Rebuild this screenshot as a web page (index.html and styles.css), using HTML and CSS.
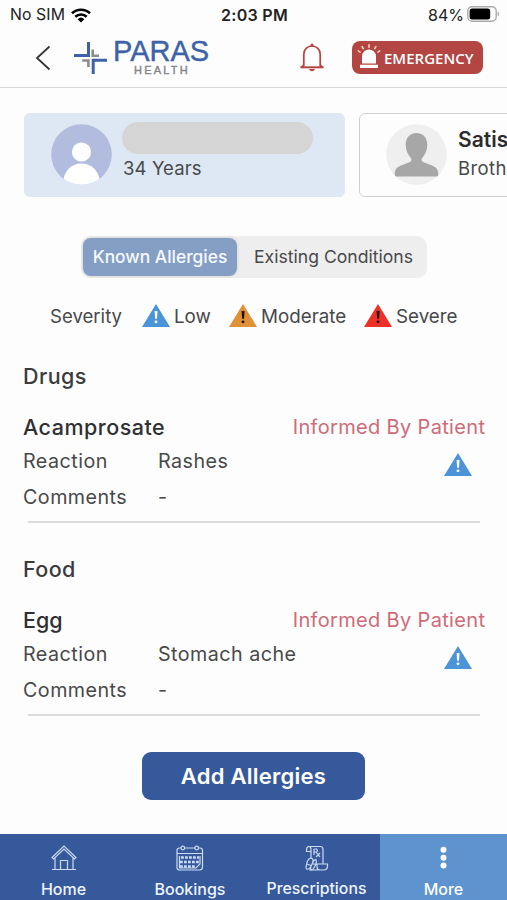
FILE: index.html
```html
<!DOCTYPE html>
<html lang="en">
<head>
<meta charset="utf-8">
<title>Paras Health - Allergies</title>
<link rel="stylesheet" href="styles.css">
</head>
<body>
<svg class="defs" width="0" height="0" aria-hidden="true">
  <symbol id="warn" viewBox="0 0 28 24" preserveAspectRatio="none">
    <path d="M14 0 28 24H0Z" fill="currentColor"/>
    <path d="M12.600 7.200h2.900l-.5 8.300h-1.900Z" fill="var(--mark)"/>
    <circle cx="14" cy="18.600" r="1.500" fill="var(--mark)"/>
  </symbol>
</svg>
<div class="screen">
  <div class="status">
    <div class="carrier"><span>No SIM</span>
      <svg width="20" height="15" viewBox="0 0 20 15"><g fill="none" stroke="#000" stroke-width="2.600"><path d="M1 5.300a13 13 0 0 1 18 0"/><path d="M4.300 8.800a8.200 8.200 0 0 1 11.400 0"/></g><path d="M6.600 11.200a5 5 0 0 1 6.800 0L10 14.600Z"/></svg>
    </div>
    <div class="time">2:03 PM</div>
    <div class="battery"><span>84%</span>
      <svg width="33" height="16" viewBox="0 0 33 16"><rect x=".8" y=".8" width="28.400" height="14.400" rx="4.200" fill="#fff" stroke="#aaa" stroke-width="1.400"/><rect x="2.600" y="2.600" width="20.600" height="10.800" rx="2.500"/><path d="M30.700 5.500c2 .7 2 4.300 0 5Z" fill="#aaa"/></svg>
    </div>
  </div>
  <header class="header">
    <svg class="back" width="16" height="26" viewBox="0 0 16 26"><path d="M14.500 1.500 2 13l12.500 11.500" fill="none" stroke="#333" stroke-width="1.800"/></svg>
    <div class="logo">
      <svg width="34" height="34" viewBox="0 0 34 34"><g fill="none"><path d="M14.500 1v13.600H0M19.200 33V19.300H33" stroke="#3d62a8" stroke-width="3"/><path d="M18.700 8.500v6.200H25M8.200 19.500h6.200V26" stroke="#8b8b8f" stroke-width="2.600"/></g></svg>
      <div class="logo-words"><div class="paras">PARAS</div><div class="health">HEALTH</div></div>
    </div>
    <svg class="bell" width="24" height="29" viewBox="0 0 24 29"><g fill="none" stroke="#b34643" stroke-width="1.700"><path d="M3.800 23.500V11.500C3.800 6.300 7.200 3 12 3s8.200 3.300 8.200 8.500v12"/><path d="M.5 24.300h23" stroke-width="2"/></g><path d="M3.800 20.500v3.800H.5ZM20.200 20.500v3.800h3.300ZM9.200 26h5.600c-.5 3-5.100 3-5.600 0Z" fill="#b34643"/><circle cx="12" cy="2.200" r="1.600" fill="#b34643"/></svg>
    <div class="emergency">
      <svg width="24" height="25" viewBox="0 0 24 25"><path d="M5 19.500V12.500a7 7 0 0 1 14 0v7ZM3 20.800h18V24H3Z" fill="#fff"/><path d="m.8 6.500 2.800 2M4.800 2.200l1.800 3M12 .2v3.600M19.200 2.200l-1.800 3M23.200 6.500l-2.800 2" stroke="#fbe4c8" stroke-width="1.500"/></svg>
      <span>EMERGENCY</span>
    </div>
  </header>
  <main class="content">
    <div class="people">
      <div class="person selected">
        <svg class="avatar" width="61" height="61" viewBox="0 0 61 61"><defs><clipPath id="c"><circle cx="30.500" cy="30.500" r="30.300"/></clipPath></defs><circle cx="30.500" cy="30.500" r="30.300" fill="#b2bcdf"/><g clip-path="url(#c)" fill="#fff"><circle cx="30.500" cy="28" r="9.600"/><path d="M11.500 61c1-14 8.500-21.500 19-21.500S48.500 47 49.500 61Z"/></g></svg>
        <div class="who"><div class="redacted"></div><div class="age">34 Years</div></div>
      </div>
      <div class="person">
        <svg class="avatar" width="61" height="61" viewBox="0 0 61 61"><circle cx="30.500" cy="30.500" r="30.300" fill="#efefef"/><path d="M30.500 9c7 0 11 5 10.800 12.500-.2 5.500-2.500 9.500-5.500 13-.7 1.700 0 3 1.800 3.800l8.500 3.200c4.200 1.600 6.200 4.500 6.200 8.500 0 1.700-.6 2.500-2 2.500H10.700c-1.400 0-2-.8-2-2.500 0-4 2-6.900 6.200-8.500l8.500-3.200c1.800-.8 2.500-2.100 1.800-3.800-3-3.500-5.300-7.500-5.500-13C19.500 14 23.500 9 30.500 9Z" fill="#a7a7a7"/></svg>
        <div class="who"><div class="name">Satish</div><div class="age relation">Brother</div></div>
      </div>
    </div>
    <div class="tabs"><div class="tab active">Known Allergies</div><div class="tab other">Existing Conditions</div></div>
    <div class="legend">
      <span class="severity">Severity</span>
      <svg class="warn low"><use href="#warn"/></svg><span class="l-low">Low</span>
      <svg class="warn moderate"><use href="#warn"/></svg><span class="l-mod">Moderate</span>
      <svg class="warn severe"><use href="#warn"/></svg><span class="l-sev">Severe</span>
    </div>
    <section class="group">
      <h2>Drugs</h2>
      <div class="top"><h3 class="drug">Acamprosate</h3><span class="informed">Informed By Patient</span></div>
      <div class="row"><span class="label">Reaction</span><span class="rashes">Rashes</span><svg class="warn low"><use href="#warn"/></svg></div>
      <div class="row comments"><span class="label">Comments</span><span>-</span></div>
      <hr>
    </section>
    <section class="group">
      <h2>Food</h2>
      <div class="top"><h3>Egg</h3><span class="informed">Informed By Patient</span></div>
      <div class="row"><span class="label">Reaction</span><span>Stomach ache</span><svg class="warn low"><use href="#warn"/></svg></div>
      <div class="row comments"><span class="label">Comments</span><span>-</span></div>
      <hr>
    </section>
    <div class="add">Add Allergies</div>
  </main>
  <nav class="nav">
    <div class="item"><svg width="26" height="26" viewBox="0 0 26 26"><g fill="none" stroke="#ccdaf2" stroke-width="1.200"><path d="M1 12.500 13 1l12 11.500-1.500 1.400L13 4 2.500 13.900ZM4 13v11.500M22 13v11.500M1 24.500h24M9.500 24V15.500h7V24"/></g></svg><span>Home</span></div>
    <div class="item"><svg width="28" height="26" viewBox="0 0 28 26"><g fill="none" stroke="#ccdaf2" stroke-width="1.200"><path d="M5 3H3.500Q1 3 1 5.500v17Q1 25 3.500 25h20q3 0 3-3V5.500Q26.500 3 24 3h-1.500M8.500 3H19M1 8.500h25.500M3.500 11v12h16.500l4-4v-8"/><circle cx="6.800" cy="3" r="1.800"/><circle cx="20.700" cy="3" r="1.800"/><path d="M5 12.500h18M4 17h20M4 21.500h15" stroke-width="2.600" stroke-dasharray="2.800 1.200"/></g></svg><span>Bookings</span></div>
    <div class="item"><svg width="24" height="26" viewBox="0 0 24 26"><g fill="none" stroke="#ccdaf2" stroke-width="1.200"><path d="M3.500 1.500h12q2.500 0 2.500 3V19M3.500 1.500Q1.500 2 1.500 5v1.500H6V4q0-2.500-2.500-2.500M6 6.500v7M8 19h14.500v2q0 4-4 4H4M8 19l4 .500v2.500q0 3 3 3M9 4v6M9 4h2.500q2 1.500 0 3H9M11 7l4 5M15 8l-4 4"/><path d="M2 18c0-3 3-5.500 5-4.500s1 5-1.500 8.500C4 24.500 1 25.500 1 22ZM7 19c1-3 3-5 4-4s0 5-2.500 8.500C6.500 26 5 25 6 22M2 19l4 1.500"/></g></svg><span class="rx">Prescriptions</span></div>
    <div class="item more"><svg width="26" height="26" viewBox="0 0 26 26" fill="#fff"><circle cx="12.500" cy="4.800" r="3"/><circle cx="12.500" cy="12.700" r="3"/><circle cx="12.500" cy="20.600" r="3"/></svg><span>More</span></div>
  </nav>
</div>
</body>
</html>
```
FILE: styles.css
```css
* { box-sizing: border-box; }
body { margin: 0; background: #fdfdfd; color: #48484a; font-family: Inter, "Liberation Sans", sans-serif; }
svg { display: block; flex: none; }
.defs { position: absolute; }
.screen { width: 507px; height: 900px; display: flex; flex-direction: column; overflow: hidden; }

.status { height: 30px; display: grid; grid-template-columns: 1fr auto 1fr; align-items: center; padding: 0 8px 0 10px; font-size: 16px; line-height: 30px; color: #222; }
.carrier, .battery { display: flex; align-items: center; }
.carrier { gap: 6px; font-size: 15.800px; letter-spacing: .1px; }
.battery { justify-content: flex-end; gap: 3px; }
.battery svg { margin-right: -1px; margin-top: -2px; }
.time { font-weight: 600; letter-spacing: .3px; }

.header { height: 58px; border-bottom: 1.500px solid #d8d8d8; display: flex; align-items: flex-start; padding-left: 35px; }
.back { margin-top: 15px; }
.logo { display: flex; margin-left: 23px; }
.logo > svg { margin-top: 11px; }
.logo-words { width: 96px; margin-left: 5px; font-family: "Liberation Sans", sans-serif; }
.paras { margin-top: 8px; font-size: 29px; line-height: 27px; color: #3d62a8; -webkit-text-stroke: .4px #3d62a8; }
.health { margin-left: 21px; font-size: 11px; line-height: 11px; letter-spacing: 2.200px; color: #858589; -webkit-text-stroke: .4px #858589; }
.bell { margin: 13px 0 0 91px; }
.emergency { margin: 11px 0 0 28px; width: 131px; height: 33px; border-radius: 8px; background: #b34643; display: flex; align-items: center; gap: 3px; padding: 0 0 3px 5px; color: #fff; font: 600 15px "Open Sans", sans-serif; }
.emergency span { padding-top: 3px; white-space: nowrap; }

.content { flex: 1; }
.people { display: flex; gap: 14px; padding: 25px 0 0 24px; width: 700px; }
.person { width: 321px; height: 84px; border: 1.500px solid #d0d0d0; border-radius: 6px; display: flex; padding: 10px 0 0 26px; }
.person.selected { border-color: #dde8f4; background: #dde8f4; }
.who { margin-left: 11px; }
.redacted { width: 191px; height: 32px; margin: -2px 0 0 -1px; border-radius: 16px; background: #d5d5d5; }
.name { height: 30px; font-size: 21px; line-height: 32px; font-weight: 600; color: #2b2b2d; }
.age { font-size: 18.500px; line-height: 28px; letter-spacing: .1px; }
.relation { letter-spacing: .4px; }

.tabs { width: 346px; height: 42px; margin: 39px 0 0 81px; padding: 2px; border-radius: 10px; background: #eee; display: flex; font-size: 17.600px; line-height: 38px; text-align: center; }
.tab.active { width: 154px; height: 38px; border-radius: 8px; background: #849fc3; color: #f6f9ff; font-size: 17.400px; font-weight: 500; box-shadow: 0 0 3px #8886; }
.tab.other { flex: 1; padding-left: 5px; }

.warn { width: 28px; height: 23px; --mark: #fff; }
.low { color: #4b94da; }
.moderate { color: #df9138; --mark: #1a1208; }
.severe { color: #ed3028; --mark: #1a1208; }
.legend { height: 28px; margin: 24px 0 0 50px; display: flex; align-items: center; font-size: 18.800px; }
.severity { width: 92px; font-size: 18.600px; }
.legend .warn { margin: -2px 4px 0 0; }
.l-low { width: 55px; }
.l-mod { width: 103px; }

.group { padding: 0 22px 0 23px; height: 193px; }
h2, h3 { margin: 0; font-weight: 500; color: #3b3b3d; }
h2 { padding-top: 31px; height: 82px; font-size: 21.500px; line-height: 30px; letter-spacing: .4px; }
.top { height: 30px; display: flex; justify-content: space-between; line-height: 30px; }
h3 { font-size: 21.500px; line-height: 30px; color: #303032; }
.drug { letter-spacing: .5px; }
.informed { font-size: 20px; letter-spacing: .33px; margin-right: -.300px; color: #ce6b78; }
.row { height: 36px; display: flex; align-items: center; padding-top: 1px; font-size: 19.700px; letter-spacing: .47px; }
.label { width: 135px; }
.row .warn { margin: 8px 13px 0 auto; }
hr { margin: 7px 5px 0; border: 0; height: 2px; background: #dcdcdc; }
.group + .group { height: 192px; }
.add { width: 223px; height: 48px; margin: 37px 0 0 142px; border-radius: 9px; background: #36599c; color: #fff; text-align: center; font-size: 22px; letter-spacing: .25px; line-height: 48px; font-weight: 600; }

.nav { height: 66px; display: grid; grid-template-columns: 127px 126px 127px 127px; background: #36599c; color: #eef3ff; font-size: 16px; font-weight: 500; }
.item { display: flex; flex-direction: column; align-items: center; padding-top: 11px; }
.item span { margin-top: 8px; line-height: 20px; }
.rx { font-size: 15.800px; }
.more { background: #5d93cf; color: #fff; }
```
